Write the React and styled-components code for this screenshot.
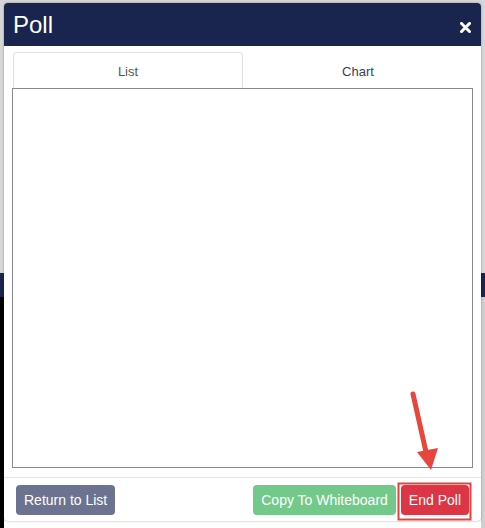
import React from "react";
import styled, { createGlobalStyle } from "styled-components";

const Global = createGlobalStyle`
  html, body { margin: 0; padding: 0; }
  body {
    width: 485px;
    height: 528px;
    overflow: hidden;
    font-family: "Liberation Sans", Arial, sans-serif;
  }
`;

const Page = styled.div`
  position: relative;
  width: 485px;
  height: 528px;
  display: flex;
  flex-direction: column;
  background: #d9d9d9;
`;

const Band = styled.div`
  height: ${(p) => p.h}px;
  background: ${(p) => p.bg};
  flex-shrink: 0;
`;

const LowerArea = styled.div`
  flex: 1;
  display: flex;
`;

const LeftStrip = styled.div`
  width: 4px;
  background: #000;
`;

const Rest = styled.div`
  flex: 1;
  background: #fff;
`;

const RightStrip = styled.div`
  width: 4px;
  background: #cfcfcf;
`;

const Modal = styled.div`
  position: absolute;
  left: 4px;
  top: 3px;
  width: 477px;
  height: 518px;
  background: #fff;
  border-radius: 4px;
  overflow: hidden;
  display: flex;
  flex-direction: column;
  box-shadow: 0 0 2px rgba(0, 0, 0, 0.4);
`;

const Header = styled.div`
  height: 43px;
  background: #19244f;
  display: flex;
  align-items: center;
  justify-content: space-between;
  padding: 0 9px 0 9px;
  flex-shrink: 0;
`;

const Title = styled.h2`
  margin: 0;
  color: #fff;
  font-size: 24px;
  font-weight: normal;
  line-height: 1;
`;

const CloseIcon = styled.svg`
  margin-top: 5px;
  margin-right: 1px;
`;

const Body = styled.div`
  flex: 1;
  display: flex;
  flex-direction: column;
  padding: 6px 8px 9px 8px;
`;

const Tabs = styled.div`
  display: flex;
  height: 36px;
  padding-left: 1px;
`;

const Tab = styled.div`
  flex: 1;
  display: flex;
  align-items: center;
  justify-content: center;
  font-size: 13px;
  color: ${(p) => (p.active ? "#555" : "#3b3f55")};
  border: 1px solid ${(p) => (p.active ? "#dedede" : "transparent")};
  border-bottom: none;
  border-radius: 4px 4px 0 0;
  padding-top: 1px;
`;

const Content = styled.div`
  flex: 1;
  border: 1px solid #8a8a8a;
  background: #fff;
`;

const Footer = styled.div`
  height: 43px;
  border-top: 1px solid #e5e5e5;
  display: flex;
  align-items: center;
  padding: 0 12px;
  gap: 5px;
  flex-shrink: 0;
`;

const Button = styled.button`
  height: 30px;
  border: none;
  border-radius: 4px;
  color: #fff;
  font-family: "Liberation Sans", Arial, sans-serif;
  font-size: 14px;
  padding: 0 ${(p) => p.px || 9}px;
  background: ${(p) => p.bg};
  cursor: pointer;
`;

const Spacer = styled.div`
  flex: 1;
`;

const Annotation = styled.svg`
  position: absolute;
  left: 0;
  top: 0;
  pointer-events: none;
`;

export default function App() {
  return (
    <>
      <Global />
      <Page>
        <Band h={273} bg="#d6d6d6" />
        <Band h={24} bg="#19244f" />
        <LowerArea>
          <LeftStrip />
          <Rest />
          <RightStrip />
        </LowerArea>
        <Modal>
          <Header>
            <Title>Poll</Title>
            <CloseIcon width="11" height="11" viewBox="0 0 11 11">
              <path d="M1.5 1.5 L9.5 9.5 M9.5 1.5 L1.5 9.5" stroke="#fff" strokeWidth="3" strokeLinecap="square" />
            </CloseIcon>
          </Header>
          <Body>
            <Tabs>
              <Tab active>List</Tab>
              <Tab>Chart</Tab>
            </Tabs>
            <Content />
          </Body>
          <Footer>
            <Button bg="#6b7391" px={8}>Return to List</Button>
            <Spacer />
            <Button bg="#72c98a" px={8}>Copy To Whiteboard</Button>
            <Button bg="#dc3545" px={8}>End Poll</Button>
          </Footer>
        </Modal>
        <Annotation width="485" height="528" viewBox="0 0 485 528">
          <line x1="413" y1="394" x2="426" y2="452" stroke="#e8453c" strokeWidth="5" strokeLinecap="round" />
          <polygon points="417,452 438,448 431,470" fill="#e8453c" />
          <rect x="398.5" y="483.5" width="72" height="36" fill="none" stroke="#e8403a" strokeWidth="2" />
        </Annotation>
      </Page>
    </>
  );
}
